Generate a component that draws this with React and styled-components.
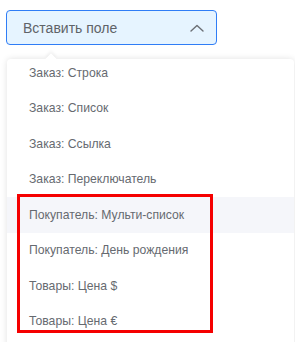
import React from 'react';
import styled, { createGlobalStyle } from 'styled-components';

const GlobalStyle = createGlobalStyle`
  html, body {
    margin: 0;
    padding: 0;
    background: #ffffff;
    font-family: "Liberation Sans", Arial, sans-serif;
  }
`

const Page = styled.div`
  position: relative;
  width: 295px;
  height: 342px;
  overflow: hidden;
  padding: 10px 1px 0 6px;
  box-sizing: border-box;
`

const Trigger = styled.button`
  width: 211px;
  height: 35px;
  display: flex;
  align-items: center;
  justify-content: space-between;
  padding: 0 12px 0 16px;
  box-sizing: border-box;
  background: #e6f4ff;
  border: 1px solid #2f7df6;
  border-radius: 4px;
  font-family: "Liberation Sans", Arial, sans-serif;
  font-size: 14px;
  color: #5f6368;
  cursor: pointer;
`

const Panel = styled.div`
  position: relative;
  margin: 14px 0 0 1px;
  height: 290px;
  background: #ffffff;
  border-radius: 4px 4px 0 0;
  box-shadow: 0 0 6px rgba(0, 0, 0, 0.12);

  &::before {
    content: "";
    position: absolute;
    top: -4px;
    left: 40px;
    width: 8px;
    height: 8px;
    background: #ffffff;
    transform: rotate(45deg);
    box-shadow: -2px -2px 3px rgba(0, 0, 0, 0.05);
  }
`

const Clip = styled.div`
  height: 100%;
  overflow: hidden;
  border-radius: 4px 4px 0 0;
`

const List = styled.ul`
  list-style: none;
  margin: -4px 0 0;
  padding: 0;
`

const Item = styled.li`
  height: 35.5px;
  display: flex;
  align-items: center;
  padding-left: 22px;
  font-size: 12.2px;
  color: #666a70;
  background: ${props => props.active ? "#f5f6fa" : "transparent"};
`

const Highlight = styled.div`
  position: absolute;
  left: 17px;
  top: 194px;
  width: 196px;
  height: 139px;
  box-sizing: border-box;
  border: 3px solid #f50000;
  pointer-events: none;
`

const items = [
  "Заказ: Строка",
  "Заказ: Список",
  "Заказ: Ссылка",
  "Заказ: Переключатель",
  "Покупатель: Мульти-список",
  "Покупатель: День рождения",
  "Товары: Цена $",
  "Товары: Цена €",
]

const Chevron = () => (
  <svg width="14" height="8" viewBox="0 0 14 8" fill="none">
    <path d="M1 7 L7 1.5 L13 7" stroke="#6b6f75" strokeWidth="1.4" strokeLinecap="round" strokeLinejoin="round" />
  </svg>
)

const App = () => {
  return (
    <Page>
      <GlobalStyle />
      <Trigger>
        <span>Вставить поле</span>
        <Chevron />
      </Trigger>
      <Panel>
        <Clip>
          <List>
            {items.map((label, i) => (
              <Item key={label} active={i === 4}>{label}</Item>
            ))}
          </List>
        </Clip>
      </Panel>
      <Highlight />
    </Page>
  )
}

export default App;
